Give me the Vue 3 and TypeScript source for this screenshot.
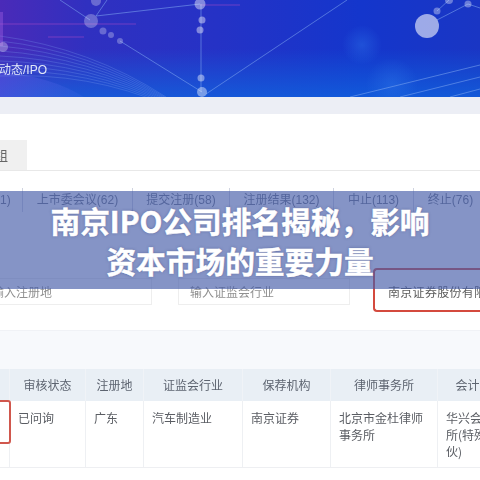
<script setup lang="ts">
const statusTabs = [
  { label: '上市委会议(62)', w: 110 },
  { label: '提交注册(58)', w: 97 },
  { label: '注册结果(132)', w: 104 },
  { label: '中止(113)', w: 80 },
  { label: '终止(76)', w: 74 },
]
const headers = [
  { label: '审核状态', w: 76 },
  { label: '注册地', w: 58 },
  { label: '证监会行业', w: 99 },
  { label: '保荐机构', w: 88 },
  { label: '律师事务所', w: 107 },
  { label: '会计师事务所', w: 108 },
]
const cells = ['已问询', '广东', '汽车制造业', '南京证券', '北京市金杜律师事务所', '华兴会计师事务所(特殊普通合伙)']
const lines = [
  'M96 16 L200 4', 'M60 0 L90 20', 'M107 0 L96 16', 'M120 41 L202 92', 'M201 4 V92', 'M206 94 L347 0',
  'M437 20 L468 4 L480 8', 'M437 11 L449 0', 'M350 97 L480 65', 'M400 97 L480 77', 'M450 97 L480 89',
]
const dots = [
  { x: 91, y: 21, r: 7, o: 0.28 }, { x: 96, y: 1, r: 5, o: 0.28 }, { x: 103, y: 31, r: 3.5, o: 0.28 },
  { x: 111, y: 35, r: 3, o: 0.28 }, { x: 120, y: 41, r: 3, o: 0.28 }, { x: 200, y: 4, r: 5.5, o: 0.42 },
  { x: 202, y: 20, r: 3.5, o: 0.42 }, { x: 200, y: 30, r: 3.5, o: 0.42 }, { x: 201, y: 78, r: 3.5, o: 0.42 },
  { x: 202, y: 92, r: 5, o: 0.42 }, { x: 427, y: 26, r: 12, o: 0.58 }, { x: 437, y: 11, r: 3.5, o: 0.35 },
  { x: 449, y: 0, r: 4, o: 0.35 }, { x: 468, y: 4, r: 3.5, o: 0.35 }, { x: 3, y: 47, r: 5, o: 0.3 },
]
const arcs = [0, 1, 2, 3, 4, 5, 6, 7, 8]
</script>

<template>
  <div class="page">
    <div class="shot">
      <header class="hero">
        <svg class="hero-art" viewBox="0 0 480 97" width="480" height="97" aria-hidden="true">
          <defs>
            <linearGradient id="heroBase" x1="0" y1="0" x2="1" y2="0">
              <stop offset="0" stop-color="#4a2ab8" />
              <stop offset="0.18" stop-color="#3030c0" />
              <stop offset="0.45" stop-color="#2532c6" />
              <stop offset="0.75" stop-color="#1436cc" />
              <stop offset="1" stop-color="#1a36c4" />
            </linearGradient>
            <linearGradient id="heroFloor" x1="0" y1="0" x2="0" y2="1">
              <stop offset="0.5" stop-color="#1068e0" stop-opacity="0" />
              <stop offset="1" stop-color="#1068e0" stop-opacity="0.7" />
            </linearGradient>
            <radialGradient id="glow">
              <stop offset="0" stop-color="#2f78ea" stop-opacity="0.4" />
              <stop offset="1" stop-color="#2f78ea" stop-opacity="0" />
            </radialGradient>
            <linearGradient id="fan" x1="0" y1="0" x2="1" y2="0">
              <stop offset="0" stop-color="#5a50e0" stop-opacity="0.55" />
              <stop offset="1" stop-color="#4a70ea" stop-opacity="0.15" />
            </linearGradient>
          </defs>
          <rect width="480" height="97" fill="url(#heroBase)" />
          <rect width="480" height="97" fill="url(#heroFloor)" />
          <circle cx="362" cy="45" r="20" fill="url(#glow)" />
          <circle cx="392" cy="84" r="26" fill="url(#glow)" />
          <path d="M0 72 Q50 76 84 97 H0 Z" fill="url(#fan)" />
          <path v-for="a in arcs" :key="a" :d="`M0 ${36 + a * 5} Q90 ${48 + a * 3} 166 ${97 + a}`" fill="none" stroke="#7fa0f0" stroke-opacity="0.4" stroke-width="0.7" />
          <path d="M0 24 H136 M48 37 H84 M200 5 H240" stroke="#a84ac8" stroke-opacity="0.55" stroke-width="1" fill="none" />
          <rect x="0" y="12" width="3" height="34" fill="#a060e0" opacity="0.4" />
          <path v-for="(d, i) in lines" :key="i" :d="d" stroke="#7fa8f0" stroke-opacity="0.55" stroke-width="1" fill="none" />
          <circle v-for="(c, i) in dots" :key="i" :cx="c.x" :cy="c.y" :r="c.r" fill="#ffffff" :fill-opacity="c.o" />
        </svg>
        <span class="crumb">动态/IPO</span>
      </header>
      <div class="strip"></div>

      <section class="tabs-area">
        <div class="tab-line"><span class="group-tab">组</span></div>
        <div class="status-row">
          <span class="status-lead">1)</span>
          <span v-for="t in statusTabs" :key="t.label" class="status" :style="{ width: t.w + 'px' }">{{ t.label }}</span>
        </div>
      </section>

      <section class="filters">
        <div class="field f-one">输入注册地</div>
        <div class="field f-two">输入证监会行业</div>
        <div class="field f-three">南京证券股份有限公司</div>
      </section>

      <div class="band"></div>

      <section class="table">
        <div class="thead">
          <div class="lead-head"></div>
          <div v-for="h in headers" :key="h.label" class="th" :style="{ width: h.w + 'px' }">{{ h.label }}</div>
        </div>
        <div class="tbody">
          <div class="lead-cell"><span class="red-box"></span></div>
          <div v-for="(c, i) in cells" :key="i" class="td" :style="{ width: headers[i].w + 'px' }">{{ c }}</div>
        </div>
      </section>
    </div>

    <div class="banner">
      <p>南京IPO公司排名揭秘，影响</p>
      <p>资本市场的重要力量</p>
    </div>
  </div>
</template>

<style scoped>
.page {
  position: relative;
  width: 480px;
  height: 480px;
  overflow: hidden;
  background: #ffffff;
  font-family: "Noto Sans CJK SC", "Liberation Sans", sans-serif;
}
.shot {
  width: 480px;
  height: 480px;
  overflow: hidden;
  filter: blur(0.5px);
}
.hero {
  position: relative;
  height: 97px;
}
.hero-art {
  display: block;
}
.crumb {
  position: absolute;
  left: -1px;
  top: 62px;
  font-size: 12px;
  line-height: 16px;
  color: #e0e6f8;
  font-family: "Liberation Sans", "Noto Sans CJK SC", sans-serif;
}
.strip {
  height: 17px;
  background: #eceef5;
}
.tabs-area {
  padding-top: 26px;
}
.tab-line {
  height: 30px;
  border-bottom: 1px solid #e8e8e8;
}
.group-tab {
  display: block;
  box-sizing: border-box;
  width: 27px;
  height: 30px;
  background: #f0f0f0;
  color: #666666;
  font-size: 13px;
  line-height: 30px;
  text-indent: -5px;
}
.status-row {
  display: flex;
  margin-top: 17px;
  height: 24px;
  align-items: stretch;
  color: #6f7686;
  font-size: 12px;
  line-height: 24px;
  font-family: "Liberation Sans", "Noto Sans CJK SC", sans-serif;
}
.status-lead {
  width: 22px;
  padding-right: 15px;
  box-sizing: border-box;
  text-align: right;
  flex: none;
}
.status {
  flex: none;
  text-align: center;
  white-space: nowrap;
  border-left: 1px solid #d0d4e0;
  box-sizing: border-box;
}
.filters {
  display: flex;
  margin-top: 66px;
  height: 27px;
}
.field {
  box-sizing: border-box;
  height: 27px;
  border: 1px solid #eeeeee;
  font-size: 12px;
  line-height: 25px;
  color: #909090;
  white-space: nowrap;
  overflow: hidden;
  flex: none;
}
.f-one {
  width: 152px;
  text-indent: -8px;
  border-left: 0;
}
.f-two {
  width: 172px;
  margin-left: 26px;
  padding-left: 11px;
}
.f-three {
  width: 107px;
  margin-left: 23px;
  padding: 4px 0 0 13px;
  border: 2px solid #d44a3e;
  border-right: 0;
  border-radius: 4px 0 0 4px;
  height: 44px;
  margin-top: -10px;
  line-height: 36px;
  color: #5c5c5c;
  letter-spacing: 0.3px;
}
.band {
  margin-top: 25px;
  height: 39px;
  background: #f7f9fc;
  border-top: 1px solid #f0f2f6;
  box-sizing: border-box;
}
.table {
  font-size: 12px;
  color: #5a5d63;
}
.thead {
  display: flex;
  height: 32px;
  background: #e9eff5;
}
.lead-head, .lead-cell {
  width: 9px;
  flex: none;
}
.th {
  flex: none;
  box-sizing: border-box;
  line-height: 32px;
  text-align: center;
  font-size: 12px;
  color: #5d6470;
  white-space: nowrap;
  overflow: hidden;
  border-left: 1px solid #f0f3f7;
}
.tbody {
  display: flex;
  height: 66px;
  border-bottom: 1px solid #eeeff2;
}
.lead-cell {
  position: relative;
}
.red-box {
  position: absolute;
  left: -6px;
  top: -1px;
  width: 17px;
  height: 44px;
  box-sizing: border-box;
  border: 2px solid #d0574d;
  border-radius: 3px;
}
.td {
  flex: none;
  box-sizing: border-box;
  padding: 8px 9px 8px 8px;
  line-height: 17px;
  border-left: 1px solid #eef0f3;
  overflow: hidden;
}
.banner {
  position: absolute;
  left: 0;
  top: 191px;
  width: 480px;
  height: 98px;
  box-sizing: border-box;
  padding-top: 10px;
  background: rgba(70, 92, 168, 0.66);
  color: #ffffff;
  text-align: center;
  font-size: 29.7px;
  font-weight: 700;
  line-height: 40px;
  -webkit-text-stroke: 0.5px #ffffff;
  text-shadow: 0 0 3px rgba(40, 50, 110, 0.5);
}
.banner p {
  margin: 0;
  white-space: nowrap;
}
</style>
